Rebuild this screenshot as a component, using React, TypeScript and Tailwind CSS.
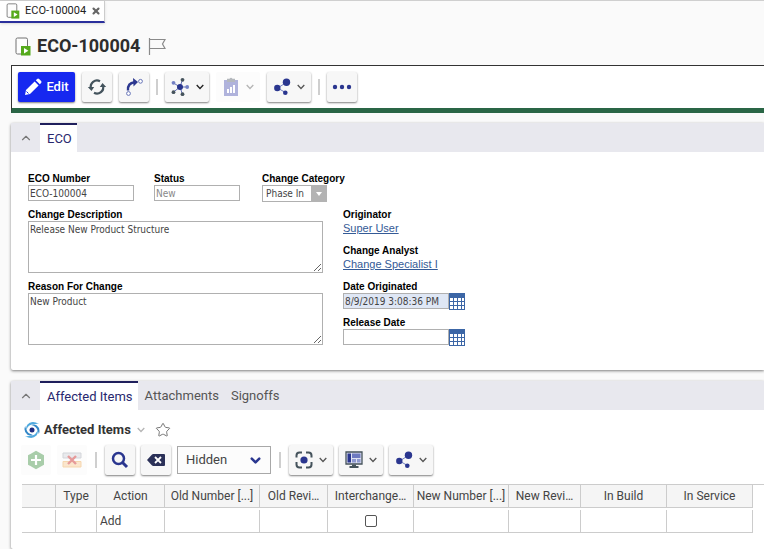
import React from "react";
import { X, ChevronUp, ChevronDown, Star } from "lucide-react";

const formFont = "font-['DejaVu_Sans_Condensed','DejaVu_Sans',sans-serif]";
const labelFont = "font-['Liberation_Sans',Arial,sans-serif]";

function DocIcon({ className }: { className: string }) {
  return (
    <svg viewBox="0 0 16 19" className={className} aria-hidden="true">
      <rect x="1" y="1" width="11.5" height="16" rx="1.5" fill="#fdfdfd" stroke="#707070" />
      <rect x="6" y="9" width="9.5" height="9.5" fill="#55aa1c" />
      <path d="M9 11v5.6l4.4-2.8z" fill="#fff" />
    </svg>
  );
}

function Caret({ className = "text-[#555]" }: { className?: string }) {
  return (
    <svg viewBox="0 0 8 6" className={`h-1.5 w-2 shrink-0 ${className}`} aria-hidden="true">
      <path d="M.7 1 4 4.5 7.3 1" fill="none" stroke="currentColor" strokeWidth="1.3" />
    </svg>
  );
}

function PencilIcon() {
  return (
    <svg viewBox="0 0 18 18" className="size-[18px]" aria-hidden="true">
      <path d="M1 17l1-5L10.6 3.4l4 4L6 16z M11.8 2.3l1.3-1.3q1-.9 2 0l2 2q.9 1 0 2l-1.3 1.3z" fill="#fff" />
      <path d="M2.5 13.5l2 2" stroke="#1628f0" strokeWidth="1" />
    </svg>
  );
}

function RefreshIcon() {
  return (
    <svg viewBox="0 0 20 20" className="size-5" aria-hidden="true">
      <path d="M4 11.500a6.300 6.300 0 0 1 9-7.300M16 8.500a6.300 6.300 0 0 1-9 7.300" fill="none" stroke="#43535c" strokeWidth="2.200" />
      <path d="M.8 10h6.400L4.500 14z M12.800 10h6.400L15.500 6z" fill="#43535c" />
    </svg>
  );
}

function PromoteIcon() {
  return (
    <svg viewBox="0 0 20 20" className="size-5" aria-hidden="true">
      <path d="M4 13.500Q3.500 6 10.500 5.300" fill="none" stroke="#2c3890" strokeWidth="2.400" />
      <path d="M9 1l5 4-4.500 4.500z" fill="#2c3890" />
      <circle cx="4.500" cy="16.500" r="1.900" fill="#fff" stroke="#6674b8" />
      <circle cx="16.500" cy="4.300" r="1.900" fill="#fff" stroke="#6674b8" />
    </svg>
  );
}

function HubIcon() {
  return (
    <svg viewBox="0 0 20 20" className="size-5" aria-hidden="true">
      <path d="M10 10 12.500 2.500M10 10 17 10M10 10 12.500 17.500M10 10 3.500 15M10 10 3.500 6" stroke="#6270b5" strokeWidth="1" />
      <circle cx="10" cy="10" r="3" fill="#28348c" />
      <circle cx="12.500" cy="2.800" r="1.900" fill="#45535c" />
      <circle cx="12.500" cy="17.200" r="1.900" fill="#45535c" />
      <circle cx="3.500" cy="15.200" r="1.900" fill="#45535c" />
      <circle cx="3.500" cy="5.800" r="1.900" fill="#7380c4" />
      <circle cx="17.200" cy="10" r="1.900" fill="#7380c4" />
    </svg>
  );
}

function ReportIcon() {
  return (
    <svg viewBox="0 0 18 20" className="h-5 w-[18px]" aria-hidden="true">
      <path d="M2 3h14v16H2z" fill="#b0b3dc" />
      <path d="M5 1.800h2.500Q9-.5 10.500 1.800H13V5H5z" fill="#b4b8bd" />
      <path d="M5 12h2v4H5z M8 10h2v6H8z M11 8h2v8h-2z" fill="#fff" />
    </svg>
  );
}

function ShareIcon() {
  return (
    <svg viewBox="0 0 18 18" className="size-[18px]" aria-hidden="true">
      <path d="M13.500 4.500 4.500 10 12.500 14.500" fill="none" stroke="#7380c4" strokeWidth="1" />
      <circle cx="13.500" cy="4.300" r="3.700" fill="#2a368f" />
      <circle cx="4.300" cy="10" r="3.200" fill="#2a368f" />
      <circle cx="12.300" cy="14.800" r="2.300" fill="#2a368f" />
    </svg>
  );
}

function DotsIcon() {
  return (
    <svg viewBox="0 0 20 6" className="h-1.5 w-5" fill="#2a368f" aria-hidden="true">
      <circle cx="3" cy="3" r="2.200" />
      <circle cx="10" cy="3" r="2.200" />
      <circle cx="17" cy="3" r="2.200" />
    </svg>
  );
}

function CalendarIcon() {
  return (
    <svg viewBox="0 0 16 17" className="block h-[17px] w-4" aria-hidden="true">
      <path d="M0 0h16v17H0z" fill="#3c66a6" />
      <path
        d="M1 5h3v3H1z M5 5h3v3H5z M9 5h3v3H9z M13 5h2v3h-2z M1 9h3v3H1z M5 9h3v3H5z M9 9h3v3H9z M13 9h2v3h-2z M1 13h3v3H1z M5 13h3v3H5z M9 13h3v3H9z M13 13h2v3h-2z"
        fill="#fff"
      />
    </svg>
  );
}

function SwirlIcon() {
  return (
    <svg viewBox="0 0 16 16" className="size-4" aria-hidden="true">
      <path d="M15 2Q8-2 3.500 2.500 1.500 5 2.500 8 4 2.500 9.500 2.300 12.500 1.600 15 2z" fill="#4fa9de" />
      <path d="M1 14Q8 18 12.500 13.500 14.500 11 13.500 8 12 13.500 6.500 13.700 3.500 14.400 1 14z" fill="#4fa9de" />
      <path d="M1.200 4Q-1 9.500 3.500 12.800 6 14 8.800 12.900 3.500 11.500 2.500 7.800 1.500 6 1.200 4z" fill="#3488c8" />
      <path d="M14.800 12Q17 6.500 12.500 3.200 10 2 7.200 3.100 12.500 4.500 13.500 8.200 14.500 10 14.800 12z" fill="#3488c8" />
      <circle cx="8" cy="8" r="2.500" fill="#1f2c80" />
    </svg>
  );
}

function AddIcon() {
  return (
    <svg viewBox="0 0 18 20" className="h-5 w-[18px]" aria-hidden="true">
      <path d="M9 .8 17 5.300v9.400L9 19.200 1 14.700V5.300z" fill="#a9cdaa" />
      <path d="M9 5v10M4 10h10" stroke="#fff" strokeWidth="2.200" />
    </svg>
  );
}

function DeleteRowIcon() {
  return (
    <svg viewBox="0 0 20 16" className="h-4 w-5" aria-hidden="true">
      <path d="M1 1h18v5H1z" fill="#e9eaed" stroke="#d3d5d9" />
      <path d="M1 9.500h18v5.500H1z" fill="#fbe6cd" stroke="#f5d6ae" />
      <path d="M6 4l8 8M14 4l-8 8" stroke="#e69a9a" strokeWidth="2.400" />
    </svg>
  );
}

function SearchIcon() {
  return (
    <svg viewBox="0 0 18 18" className="size-[18px]" aria-hidden="true">
      <circle cx="7.500" cy="7.500" r="5.500" fill="none" stroke="#2a368f" strokeWidth="2.500" />
      <path d="M11.500 11.500l4.500 4.500" stroke="#2a368f" strokeWidth="3" />
    </svg>
  );
}

function ClearIcon() {
  return (
    <svg viewBox="0 0 18 12" className="h-3 w-[18px]" aria-hidden="true">
      <path d="M0 6 4.800.7Q5.400 0 6.300 0H17q1 0 1 1v10q0 1-1 1H6.300q-.9 0-1.500-.7z" fill="#2b3158" />
      <path d="M8 3l6 6M14 3 8 9" stroke="#fff" strokeWidth="1.800" />
    </svg>
  );
}

function FocusIcon() {
  return (
    <svg viewBox="0 0 18 18" className="size-[18px]" aria-hidden="true">
      <path
        d="M1.500 6.500v-2q0-3 3-3h2.500M11 1.500h2.500q3 0 3 3v2M16.500 11v2.500q0 3-3 3H11M7 16.500H4.500q-3 0-3-3V11"
        fill="none"
        stroke="#45535c"
        strokeWidth="2"
      />
      <circle cx="9" cy="9" r="3.600" fill="#2a368f" />
    </svg>
  );
}

function MonitorIcon() {
  return (
    <svg viewBox="0 0 18 18" className="size-[18px]" aria-hidden="true">
      <path d="M1 1h16v12H1z" fill="#dfe2f2" stroke="#45535c" strokeWidth="1.300" />
      <path d="M2.500 2.500H6v9H2.500z" fill="#2a368f" />
      <path d="M7 2.500h8.500V7H7z" fill="#6d79c0" />
      <path d="M7 8h4v3.500H7z M12 8h3.500v3.500H12z" fill="#8e98d0" />
      <path d="M7 13.500h4V15h2.500v2h-9v-2H7z" fill="#45535c" />
    </svg>
  );
}

interface ToolProps {
  label: string;
  children: React.ReactNode;
  menu?: boolean;
  disabled?: boolean;
  caret?: string;
}

function Tool({ label, children, menu, disabled, caret }: ToolProps) {
  const width = menu ? "w-11 gap-1.5" : "w-[30px]";
  const look = disabled
    ? "bg-[#fcfcfc]"
    : "bg-[#f7f7f7] shadow-[0_1px_2px_rgba(0,0,0,0.5)]";
  return (
    <button
      type="button"
      aria-label={label}
      disabled={disabled}
      className={`flex h-[30px] shrink-0 items-center justify-center rounded-xs ${width} ${look}`}
    >
      {children}
      {menu && <Caret className={caret} />}
    </button>
  );
}

function Divider({ className = "" }: { className?: string }) {
  return <span className={`h-4 w-0.5 shrink-0 bg-[#cfcfcf] ${className}`} />;
}

function Collapse({ label }: { label: string }) {
  return (
    <button type="button" aria-label={label} className="flex w-[29px] shrink-0 items-center justify-center text-[#777]">
      <ChevronUp size={14} strokeWidth={2} />
    </button>
  );
}

function Field({ id, label, children, className = "" }: { id: string; label: string; children: React.ReactNode; className?: string }) {
  return (
    <div className={`flex flex-col items-start ${className}`}>
      <label htmlFor={id} className={`h-3 text-[10px] leading-3 font-bold whitespace-nowrap text-black ${labelFont}`}>
        {label}
      </label>
      {children}
    </div>
  );
}

const box = `block border border-[#b0b0b0] px-px text-[10px] ${formFont}`;

function LinkField({ label, value }: { label: string; value: string }) {
  return (
    <div className={`flex flex-col items-start pb-0.5 ${labelFont}`}>
      <span className="text-[10px] leading-3 font-bold text-black">{label}</span>
      <a href="#" className="text-[11px] leading-[14px] text-[#345a96] underline">
        {value}
      </a>
    </div>
  );
}

function DateField({ id, label, value, className }: { id: string; label: string; value: string; className: string }) {
  return (
    <Field id={id} label={label}>
      <div className="flex h-4">
        <input id={id} readOnly defaultValue={value} className={`${box} h-4 w-[106px] text-[#444] ${className}`} />
        <button type="button" aria-label={`Pick ${label}`} className="h-[17px]">
          <CalendarIcon />
        </button>
      </div>
    </Field>
  );
}

const columns = [
  { name: "", width: "w-[34px]" },
  { name: "Type", width: "w-[41px]" },
  { name: "Action", width: "w-[68px]" },
  { name: "Old Number [...]", width: "w-[95px]" },
  { name: "Old Revi…", width: "w-[68px]" },
  { name: "Interchange…", width: "w-[86px]" },
  { name: "New Number [...]", width: "w-[95px]" },
  { name: "New Revi…", width: "w-[72px]" },
  { name: "In Build", width: "w-[86px]" },
  { name: "In Service", width: "w-[86px]" },
];

const tab = "pr-[5px] pl-[7px]";
const activeTab = "border-t-2 border-[#1f1f5c] bg-white text-[#28286e]";

export default function App() {
  return (
    <div className="min-h-screen overflow-x-hidden bg-[#fafafa] font-[Roboto,sans-serif] text-[#333]">
      <nav className="flex border-t border-[#cfcfcf]">
        <div className="flex h-[22px] items-center border-r border-b-2 border-r-[#ccc] border-b-[#2a2f9c] bg-white pr-[3px] pl-1.5 shadow-sm">
          <DocIcon className="h-4 w-3.5" />
          <a href="#" className="ml-[5px] text-[11px] leading-4 text-[#222]">
            ECO-100004
          </a>
          <button type="button" aria-label="Close tab" className="ml-[5px] text-[#666]">
            <X size={10} strokeWidth={5} />
          </button>
        </div>
      </nav>

      <main className="pl-[11px]">
        <header className="flex h-[42px] items-center pt-1 pl-1">
          <DocIcon className="h-[19px] w-4" />
          <h1 className="ml-1.5 text-lg leading-6 font-bold text-[#2d2d2d]">ECO-100004</h1>
          <button type="button" aria-label="Flag" className="ml-2">
            <svg viewBox="0 0 18 17" className="block h-[17px] w-[18px]" aria-hidden="true">
              <path d="M1.500 0v17M1.500 1.500H17L14.500 6l2.500 4.500H1.500" fill="none" stroke="#8a8a8a" strokeWidth="1.200" />
            </svg>
          </button>
        </header>

        <div className="flex items-center gap-[7px] border-t border-b-5 border-l border-t-[#333] border-b-[#2a6646] border-l-[#333] bg-white py-1.5 pl-1.5">
          <button
            type="button"
            className="flex h-[30px] w-[57px] items-center justify-center gap-1 rounded-xs bg-[#1628f0] text-[13px] font-medium text-white shadow-[0_1px_2px_rgba(0,0,0,0.5)]"
          >
            <PencilIcon />
            Edit
          </button>
          <Tool label="Refresh"><RefreshIcon /></Tool>
          <Tool label="Promote"><PromoteIcon /></Tool>
          <Divider />
          <Tool label="Navigate" menu caret="text-[#222]"><HubIcon /></Tool>
          <Tool label="Reports" menu disabled caret="text-[#b5b5b5]"><ReportIcon /></Tool>
          <Tool label="Share" menu><ShareIcon /></Tool>
          <Divider />
          <Tool label="More"><DotsIcon /></Tool>
        </div>

        <section className="mt-2.5 rounded-l-xs bg-white shadow-[0_1px_3px_rgba(0,0,0,0.5)]">
          <div className="flex h-[29px] bg-[#e8e8ee] text-[13px]">
            <Collapse label="Collapse form" />
            <button type="button" className={`${tab} ${activeTab}`}>
              ECO
            </button>
          </div>
          <form className="flex gap-5 pt-[21px] pb-[25px] pl-[17px]">
            <div className="flex w-[295px] shrink-0 flex-col gap-2">
              <div className="flex">
                <Field id="number" label="ECO Number" className="w-[126px] shrink-0">
                  <input id="number" readOnly defaultValue="ECO-100004" className={`${box} h-4 w-[106px] bg-white text-[#444]`} />
                </Field>
                <Field id="status" label="Status" className="w-[108px] shrink-0">
                  <input id="status" readOnly defaultValue="New" className={`${box} h-4 w-[86px] bg-white text-[#888]`} />
                </Field>
                <Field id="category" label="Change Category">
                  <div className="relative h-4 w-[65px]">
                    <select id="category" className={`${box} h-[17px] w-full appearance-none bg-white pl-[3px] text-[#444]`}>
                      <option>Phase In</option>
                    </select>
                    <span className="pointer-events-none absolute top-0 right-0 flex h-[17px] w-4 items-center justify-center bg-[#b3b3b3]">
                      <svg viewBox="0 0 6 4" className="h-1 w-1.5" aria-hidden="true">
                        <path d="M0 0h6L3 4z" fill="#fff" />
                      </svg>
                    </span>
                  </div>
                </Field>
              </div>
              <Field id="description" label="Change Description">
                <textarea id="description" readOnly defaultValue="Release New Product Structure" className={`${box} h-[52px] w-full bg-white py-0.5 leading-3 text-[#444]`} />
              </Field>
              <Field id="reason" label="Reason For Change">
                <textarea id="reason" readOnly defaultValue="New Product" className={`${box} h-[52px] w-full bg-white py-0.5 leading-3 text-[#444]`} />
              </Field>
            </div>
            <div className="flex flex-col gap-2 pt-9">
              <LinkField label="Originator" value="Super User" />
              <LinkField label="Change Analyst" value="Change Specialist I" />
              <DateField id="originated" label="Date Originated" value="8/9/2019 3:08:36 PM" className="bg-[#dfe7f5]" />
              <DateField id="release" label="Release Date" value="" className="bg-white" />
            </div>
          </form>
        </section>

        <section className="mt-[11px] min-h-[168px] rounded-l-xs bg-white shadow-[0_1px_3px_rgba(0,0,0,0.5)]">
          <div className="flex h-[29px] bg-[#e8e8ee] text-[13px] text-[#555]">
            <Collapse label="Collapse relationships" />
            <button type="button" className={`${tab} ${activeTab}`}>
              Affected Items
            </button>
            <button type="button" className={tab}>Attachments</button>
            <button type="button" className={tab}>Signoffs</button>
          </div>

          <div className="flex h-[35px] items-center pt-1 pl-[13px]">
            <SwirlIcon />
            <h2 className="ml-1 text-[13px] leading-4 font-bold text-[#333]">Affected Items</h2>
            <button type="button" aria-label="Item menu" className="ml-1.5">
              <Caret className="text-[#b5b5b5]" />
            </button>
            <button type="button" aria-label="Favorite" className="ml-2.5 text-[#777]">
              <Star size={16} strokeWidth={1.500} />
            </button>
          </div>

          <div className="flex items-center gap-1.5 pl-2.5">
            <Tool label="Add" disabled><AddIcon /></Tool>
            <Tool label="Delete" disabled><DeleteRowIcon /></Tool>
            <Divider className="mx-0.5" />
            <Tool label="Search"><SearchIcon /></Tool>
            <Tool label="Clear search"><ClearIcon /></Tool>
            <div className="relative w-[94px]">
              <select aria-label="Search mode" className="block h-7 w-full appearance-none border border-[#a8a8a8] bg-[#fcfcfc] pl-2 text-[13px] text-[#444]">
                <option>Hidden</option>
              </select>
              <ChevronDown size={15} strokeWidth={4} className="pointer-events-none absolute top-[7px] right-2 text-[#2a368f]" />
            </div>
            <Divider className="mx-0.5" />
            <Tool label="Focus" menu><FocusIcon /></Tool>
            <Tool label="Layout" menu><MonitorIcon /></Tool>
            <Tool label="Share items" menu><ShareIcon /></Tool>
          </div>

          <div className="mt-[9px] ml-[11px] border-t border-[#ccc]">
            <table className="w-[731px] table-fixed border-separate border-spacing-0 text-xs text-[#444]">
              <thead>
                <tr>
                  {columns.map((c, i) => (
                    <th key={i} className={`h-[23px] border-r border-b border-[#ccc] bg-[#f5f5f5] p-0 text-center font-normal whitespace-nowrap ${c.width}`}>
                      {c.name}
                    </th>
                  ))}
                </tr>
              </thead>
              <tbody>
                <tr className="h-0.5">
                  <td colSpan={10} className="p-0" />
                </tr>
                <tr>
                  {columns.map((c, i) => (
                    <td key={i} className="h-[23px] border-r border-b border-[#ccc] p-0">
                      {c.name === "Action" && <span className="pl-[3px]">Add</span>}
                      {c.name === "Interchange…" && (
                        <input
                          type="checkbox"
                          aria-label="Interchangeable"
                          className="mx-auto block size-3 appearance-none rounded-xs border border-[#555] bg-white"
                        />
                      )}
                    </td>
                  ))}
                </tr>
              </tbody>
            </table>
          </div>
        </section>
      </main>
    </div>
  );
}
